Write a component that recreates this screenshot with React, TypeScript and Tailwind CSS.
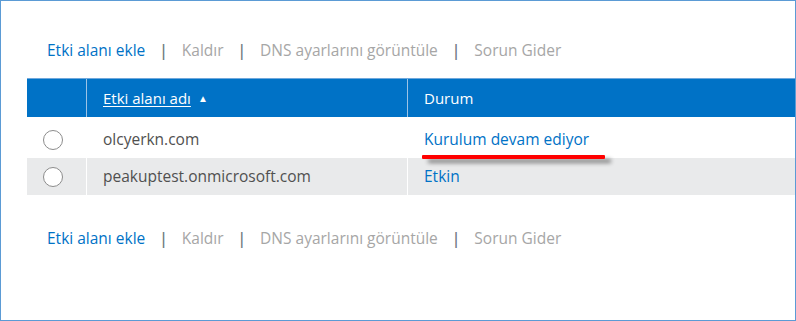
import React from 'react';

const font = { fontFamily: '"Open Sans", "Noto Sans", sans-serif' };

function Toolbar() {
  return (
    <div className="flex items-center h-[22px] text-[15.5px] pl-[46px]">
      <a className="text-[#0072c6] cursor-pointer">Etki alanı ekle</a>
      <span className="mx-[14px] font-semibold text-[#6e7780]">|</span>
      <span className="text-[#a6a6a6]">Kaldır</span>
      <span className="mx-[14px] font-semibold text-[#6e7780]">|</span>
      <span className="text-[#a6a6a6]">DNS ayarlarını görüntüle</span>
      <span className="mx-[14px] font-semibold text-[#6e7780]">|</span>
      <span className="text-[#a6a6a6]">Sorun Gider</span>
    </div>
  );
}

function Radio() {
  return <div className="w-[20px] h-[20px] rounded-full border border-[#8c8c8c] bg-white" />;
}

export default function App() {
  return (
    <div style={font} className="w-[796px] h-[321px] border border-[#5b9bd5] bg-white overflow-hidden">
      <div className="pt-[39px]">
        <Toolbar />
      </div>

      <div className="ml-[26px] mt-[16px]">
        {/* header */}
        <div className="flex h-[39px] bg-[#0072c6] border-t border-[#6fa8dc] text-white text-[15px]">
          <div className="w-[59px]" />
          <div className="w-[1px] bg-[#9cc3e6]" />
          <div className="w-[320px] flex items-center pl-[16px]">
            <span className="underline underline-offset-2">Etki alanı adı</span>
            <span className="ml-[7px] text-[10px]">▲</span>
          </div>
          <div className="w-[1px] bg-[#9cc3e6]" />
          <div className="flex-1 flex items-center pl-[16px]">Durum</div>
        </div>

        {/* row 1 */}
        <div className="flex h-[41px] text-[15.5px]">
          <div className="w-[59px] flex items-center pl-[16px] pt-[4px]">
            <Radio />
          </div>
          <div className="w-[1px]" />
          <div className="w-[320px] flex items-center pl-[16px] pt-[4px] text-[#505050]">olcyerkn.com</div>
          <div className="w-[1px]" />
          <div className="flex-1 flex items-center pl-[16px] pt-[4px] text-[#0072c6] relative">
            Kurulum devam ediyor
            <div className="absolute left-[14px] top-[38px] w-[183px] h-[4px] bg-[#ff0000] rounded-[1px] shadow-[6px_4px_4px_rgba(0,0,0,0.45)]" />
          </div>
        </div>

        {/* row 2 */}
        <div className="flex h-[37px] text-[15.5px] bg-[#e9eaeb]">
          <div className="w-[59px] flex items-center pl-[16px]">
            <Radio />
          </div>
          <div className="w-[1px] bg-white" />
          <div className="w-[320px] flex items-center pl-[16px] pt-[1px] text-[#505050]">peakuptest.onmicrosoft.com</div>
          <div className="w-[1px] bg-white" />
          <div className="flex-1 flex items-center pl-[16px] pt-[1px] text-[#0072c6]">Etkin</div>
        </div>
      </div>

      <div className="pt-[33px]">
        <Toolbar />
      </div>
    </div>
  );
}
